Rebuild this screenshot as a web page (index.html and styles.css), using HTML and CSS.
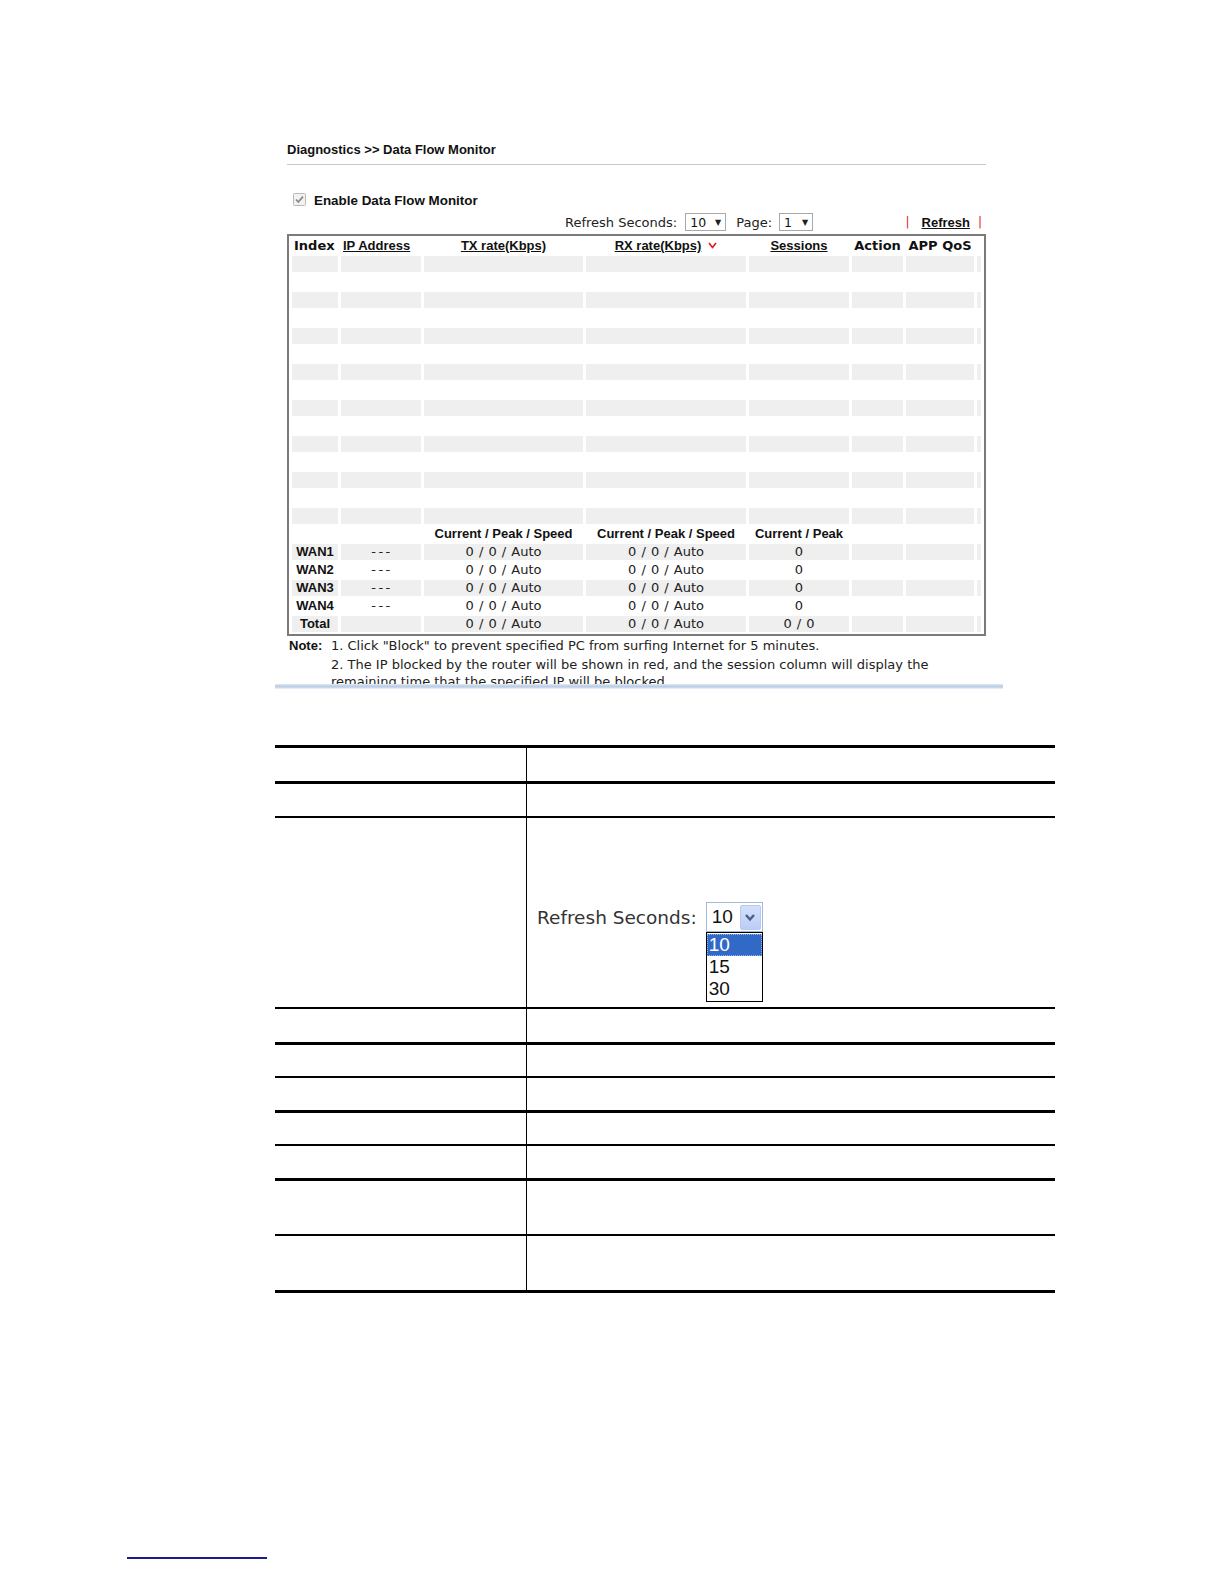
FILE: index.html
```html
<!DOCTYPE html>
<html>
<head>
<meta charset="utf-8">
<title>Data Flow Monitor</title>
<link rel="stylesheet" href="styles.css">
</head>
<body>
<div class="page">
  <div class="shot">
    <div class="shot-clip">
      <div class="title">Diagnostics &gt;&gt; Data Flow Monitor</div>
      <div class="enable">
        <span class="cb"><svg width="13" height="13" viewBox="0 0 13 13"><rect x="0.5" y="0.5" width="12" height="12" rx="1" fill="#f2f2f2" stroke="#b9b9b9"/><path d="M3 6.5 L5.3 9 L10 3.6" fill="none" stroke="#8a8a8a" stroke-width="1.8"/></svg></span>
        <span class="enable-text">Enable Data Flow Monitor</span>
      </div>
      <div class="toolbar">
        <span class="lbl">Refresh Seconds:</span>
        <span class="sel sel-sec"><span>10</span><span class="tri">&#9660;</span></span>
        <span class="lbl lbl-page">Page:</span>
        <span class="sel sel-page"><span>1</span><span class="tri">&#9660;</span></span>
        <span class="refresh"><span class="pipe">|</span><span class="reflink">Refresh</span><span class="pipe">|</span></span>
      </div>
      <table class="mon">
        <colgroup>
          <col class="c1"><col class="c2"><col class="c3"><col class="c4"><col class="c5"><col class="c6"><col class="c7"><col class="c8">
        </colgroup>
        <tr class="head">
          <td class="hd left">Index</td>
          <td class="lnk left"><span class="u">IP Address</span></td>
          <td class="lnk"><span class="u">TX rate(Kbps)</span></td>
          <td class="lnk"><span class="u">RX rate(Kbps)</span><svg class="sort" width="9" height="7" viewBox="0 0 9 7"><path d="M1 1 L4.5 5.5 L8 1" fill="none" stroke="#e0191f" stroke-width="1.6"/></svg></td>
          <td class="lnk"><span class="u">Sessions</span></td>
          <td class="hd">Action</td>
          <td class="hd">APP QoS</td>
          <td></td>
        </tr>
        <tr class="g"><td></td><td></td><td></td><td></td><td></td><td></td><td></td><td></td></tr>
        <tr><td></td><td></td><td></td><td></td><td></td><td></td><td></td><td></td></tr>
        <tr class="g"><td></td><td></td><td></td><td></td><td></td><td></td><td></td><td></td></tr>
        <tr><td></td><td></td><td></td><td></td><td></td><td></td><td></td><td></td></tr>
        <tr class="g"><td></td><td></td><td></td><td></td><td></td><td></td><td></td><td></td></tr>
        <tr><td></td><td></td><td></td><td></td><td></td><td></td><td></td><td></td></tr>
        <tr class="g"><td></td><td></td><td></td><td></td><td></td><td></td><td></td><td></td></tr>
        <tr><td></td><td></td><td></td><td></td><td></td><td></td><td></td><td></td></tr>
        <tr class="g"><td></td><td></td><td></td><td></td><td></td><td></td><td></td><td></td></tr>
        <tr><td></td><td></td><td></td><td></td><td></td><td></td><td></td><td></td></tr>
        <tr class="g"><td></td><td></td><td></td><td></td><td></td><td></td><td></td><td></td></tr>
        <tr><td></td><td></td><td></td><td></td><td></td><td></td><td></td><td></td></tr>
        <tr class="g"><td></td><td></td><td></td><td></td><td></td><td></td><td></td><td></td></tr>
        <tr><td></td><td></td><td></td><td></td><td></td><td></td><td></td><td></td></tr>
        <tr class="g"><td></td><td></td><td></td><td></td><td></td><td></td><td></td><td></td></tr>
        <tr class="sub">
          <td></td><td></td>
          <td class="b">Current / Peak / Speed</td>
          <td class="b">Current / Peak / Speed</td>
          <td class="b">Current / Peak</td>
          <td></td><td></td><td></td>
        </tr>
        <tr class="g">
          <td class="b">WAN1</td><td class="v dash">---</td><td class="v">0 / 0 / Auto</td><td class="v">0 / 0 / Auto</td><td class="v">0</td><td></td><td></td><td></td>
        </tr>
        <tr>
          <td class="b">WAN2</td><td class="v dash">---</td><td class="v">0 / 0 / Auto</td><td class="v">0 / 0 / Auto</td><td class="v">0</td><td></td><td></td><td></td>
        </tr>
        <tr class="g">
          <td class="b">WAN3</td><td class="v dash">---</td><td class="v">0 / 0 / Auto</td><td class="v">0 / 0 / Auto</td><td class="v">0</td><td></td><td></td><td></td>
        </tr>
        <tr>
          <td class="b">WAN4</td><td class="v dash">---</td><td class="v">0 / 0 / Auto</td><td class="v">0 / 0 / Auto</td><td class="v">0</td><td></td><td></td><td></td>
        </tr>
        <tr class="g">
          <td class="b">Total</td><td></td><td class="v">0 / 0 / Auto</td><td class="v">0 / 0 / Auto</td><td class="v">0 / 0</td><td></td><td></td><td></td>
        </tr>
      </table>
      <div class="note">
        <span class="note-k">Note:</span>
        <div class="note-lines">
          <div class="nl nl1">1. Click "Block" to prevent specified PC from surfing Internet for 5 minutes.</div>
          <div class="nl nl2">2. The IP blocked by the router will be shown in red, and the session column will display the</div>
          <div class="nl nl3">remaining time that the specified IP will be blocked.</div>
        </div>
      </div>
    </div>
    <div class="shadow"></div>
  </div>

  <div class="desc">
    <div class="row r1 thick"><div class="k"></div><div class="v2"></div></div>
    <div class="row r2 thin"><div class="k"></div><div class="v2"></div></div>
    <div class="row r3 thin">
      <div class="k"></div>
      <div class="v2">
        <div class="demo">
          <span class="demo-lbl">Refresh Seconds:</span>
          <div class="demo-col">
            <div class="demo-sel">
              <span class="demo-val">10</span>
              <span class="demo-btn"><svg width="12" height="9" viewBox="0 0 12 9"><path d="M2 2 L6 6.5 L10 2" fill="none" stroke="#4a5f8c" stroke-width="2.4"/></svg></span>
            </div>
            <div class="demo-list">
              <div class="opt on">10</div>
              <div class="opt">15</div>
              <div class="opt">30</div>
            </div>
          </div>
        </div>
      </div>
    </div>
    <div class="row r4 thick"><div class="k"></div><div class="v2"></div></div>
    <div class="row r5 thin"><div class="k"></div><div class="v2"></div></div>
    <div class="row r6 thick"><div class="k"></div><div class="v2"></div></div>
    <div class="row r7 thin"><div class="k"></div><div class="v2"></div></div>
    <div class="row r8 thick"><div class="k"></div><div class="v2"></div></div>
    <div class="row r9 thin"><div class="k"></div><div class="v2"></div></div>
    <div class="row r10 thick"><div class="k"></div><div class="v2"></div></div>
  </div>

  <div class="footline"></div>
</div>
</body>
</html>
```

FILE: styles.css
```css
html, body {
  margin: 0;
  padding: 0;
  background: #ffffff;
}

.page {
  width: 1224px;
  height: 1584px;
  box-sizing: border-box;
  padding: 140px 0 0 275px;
  font-family: "DejaVu Sans", Verdana, sans-serif;
  color: #000;
  position: relative;
}

/* ---------- screenshot block ---------- */
.shot {
  width: 728px;
}

.shot-clip {
  height: 544px;
  overflow: hidden;
  padding: 0 17px 0 12px;
}

.title {
  font-family: "Liberation Sans", Arial, sans-serif;
  font-weight: bold;
  font-size: 13px;
  line-height: 20px;
  height: 20px;
  padding-bottom: 4px;
  border-bottom: 1px solid #c9c9c9;
  color: #111;
}

.enable {
  margin-top: 26px;
  height: 18px;
  display: flex;
  align-items: center;
  padding-left: 6px;
}

.cb {
  display: inline-flex;
  width: 13px;
  height: 13px;
  margin-top: -2px;
}

.enable-text {
  margin-left: 8px;
  font-family: "Liberation Sans", Arial, sans-serif;
  font-weight: bold;
  font-size: 13.4px;
  color: #111;
}

.toolbar {
  margin-top: 3px;
  height: 20px;
  display: flex;
  align-items: center;
  padding-left: 278px;
  padding-right: 4px;
  font-size: 13px;
  color: #222;
}

.lbl {
  white-space: nowrap;
}

.lbl-page {
  margin-left: 10px;
}

.sel {
  margin-left: 8px;
  box-sizing: border-box;
  height: 18px;
  border: 1px solid #a9a9a9;
  display: inline-flex;
  align-items: center;
  justify-content: space-between;
  padding: 0 4px 0 4px;
  font-size: 12.5px;
  color: #111;
  background: #fff;
}

.sel-sec { width: 41px; }
.sel-page { width: 34px; margin-left: 7px; }

.tri {
  font-size: 8px;
  color: #222;
}

.refresh {
  margin-left: auto;
  display: inline-flex;
  align-items: center;
}

.pipe {
  color: #e0191f;
  font-size: 12px;
}

.reflink {
  margin: 0 8px 0 12px;
  font-family: "Liberation Sans", Arial, sans-serif;
  font-weight: bold;
  font-size: 13px;
  text-decoration: underline;
  color: #111;
}

/* monitor table */
.mon {
  margin-top: 2px;
  width: 699px;
  border: 2px solid #7b7b7b;
  border-collapse: separate;
  border-spacing: 3px 2px;
  table-layout: fixed;
  box-sizing: border-box;
}

.mon .c1 { width: 46px; }
.mon .c2 { width: 80px; }
.mon .c3 { width: 159px; }
.mon .c4 { width: 160px; }
.mon .c5 { width: 100px; }
.mon .c6 { width: 51px; }
.mon .c7 { width: 68px; }
.mon .c8 { width: 4px; }

.mon td {
  height: 16px;
  padding: 0;
  line-height: 16px;
  font-size: 13px;
  text-align: center;
  white-space: nowrap;
  overflow: visible;
}

.mon tr.g td {
  background: #efefef;
}

.mon td.left {
  text-align: left;
  padding-left: 2px;
}

.mon td.hd {
  font-family: "DejaVu Sans", Verdana, sans-serif;
  font-weight: bold;
  font-size: 13px;
  color: #111;
}

.mon td.lnk {
  font-family: "Liberation Sans", Arial, sans-serif;
  font-weight: bold;
  font-size: 13px;
  color: #111;
}

.mon td.lnk .u {
  text-decoration: underline;
}

.mon .sort {
  margin-left: 7px;
  vertical-align: 1px;
}

.mon td.b {
  font-family: "Liberation Sans", Arial, sans-serif;
  font-weight: bold;
  font-size: 13px;
  color: #111;
}

.mon td.v {
  font-size: 13px;
  word-spacing: 1px;
  color: #222;
}

.mon td.dash {
  letter-spacing: 2.5px;
  text-indent: 2px;
}

/* note */
.note {
  display: flex;
  padding-left: 2px;
  font-size: 13px;
  color: #222;
}

.note-k {
  width: 42px;
  flex: none;
  font-family: "Liberation Sans", Arial, sans-serif;
  font-weight: bold;
  font-size: 13px;
  line-height: 20px;
  color: #111;
}

.nl {
  white-space: nowrap;
}

.nl1 { line-height: 20px; }
.nl2 { line-height: 18px; }
.nl3 { line-height: 16px; }

.shadow {
  height: 5px;
  background: linear-gradient(to bottom, #e4ecf5 0%, #b9cce2 45%, #c9d8ea 70%, #f2f6fb 100%);
}

/* ---------- description table ---------- */
.desc {
  margin-top: 56px;
  width: 780px;
  border-top: 3px solid #000;
}

.desc .row {
  display: grid;
  grid-template-columns: 252px 1fr;
}

.desc .row.thick { border-bottom: 3px solid #000; }
.desc .row.thin { border-bottom: 2px solid #000; }

.desc .k {
  border-right: 1px solid #000;
}

.desc .r1 { height: 33px; }
.desc .r2 { height: 32px; }
.desc .r3 { height: 189px; }
.desc .r4 { height: 33px; }
.desc .r5 { height: 31px; }
.desc .r6 { height: 32px; }
.desc .r7 { height: 31px; }
.desc .r8 { height: 32px; }
.desc .r9 { height: 53px; }
.desc .r10 { height: 54px; }

.demo {
  display: flex;
  align-items: flex-start;
  padding: 84px 0 0 10px;
}

.demo-lbl {
  font-family: "DejaVu Sans", Verdana, sans-serif;
  font-size: 18.5px;
  color: #333;
  margin-top: 5px;
  margin-right: 9px;
  white-space: nowrap;
}

.demo-col {
  width: 57px;
}

.demo-sel {
  box-sizing: border-box;
  height: 30px;
  border: 1px solid #a3b9d6;
  display: flex;
  align-items: center;
  justify-content: space-between;
  padding: 0 1px 0 5px;
  background: #fff;
}

.demo-val {
  font-family: "Liberation Sans", Arial, sans-serif;
  font-size: 19px;
  color: #111;
}

.demo-btn {
  width: 21px;
  height: 25px;
  box-sizing: border-box;
  border: 1px solid #b7c9ef;
  border-radius: 2px;
  background: linear-gradient(to bottom, #d4e0fb, #bccdf6);
  display: flex;
  align-items: center;
  justify-content: center;
}

.demo-list {
  box-sizing: border-box;
  height: 70px;
  border: 1px solid #000;
  background: #fff;
  padding-top: 1px;
}

.opt {
  height: 22px;
  line-height: 22px;
  padding-left: 2px;
  font-family: "Liberation Sans", Arial, sans-serif;
  font-size: 19px;
  color: #111;
}

.opt.on {
  background: #3169c6;
  color: #fff;
  outline: 1px dotted #9db6e4;
  outline-offset: -1px;
}

.footline {
  position: absolute;
  left: 127px;
  top: 1557px;
  width: 140px;
  height: 2px;
  background: #1b1b8a;
}
```
